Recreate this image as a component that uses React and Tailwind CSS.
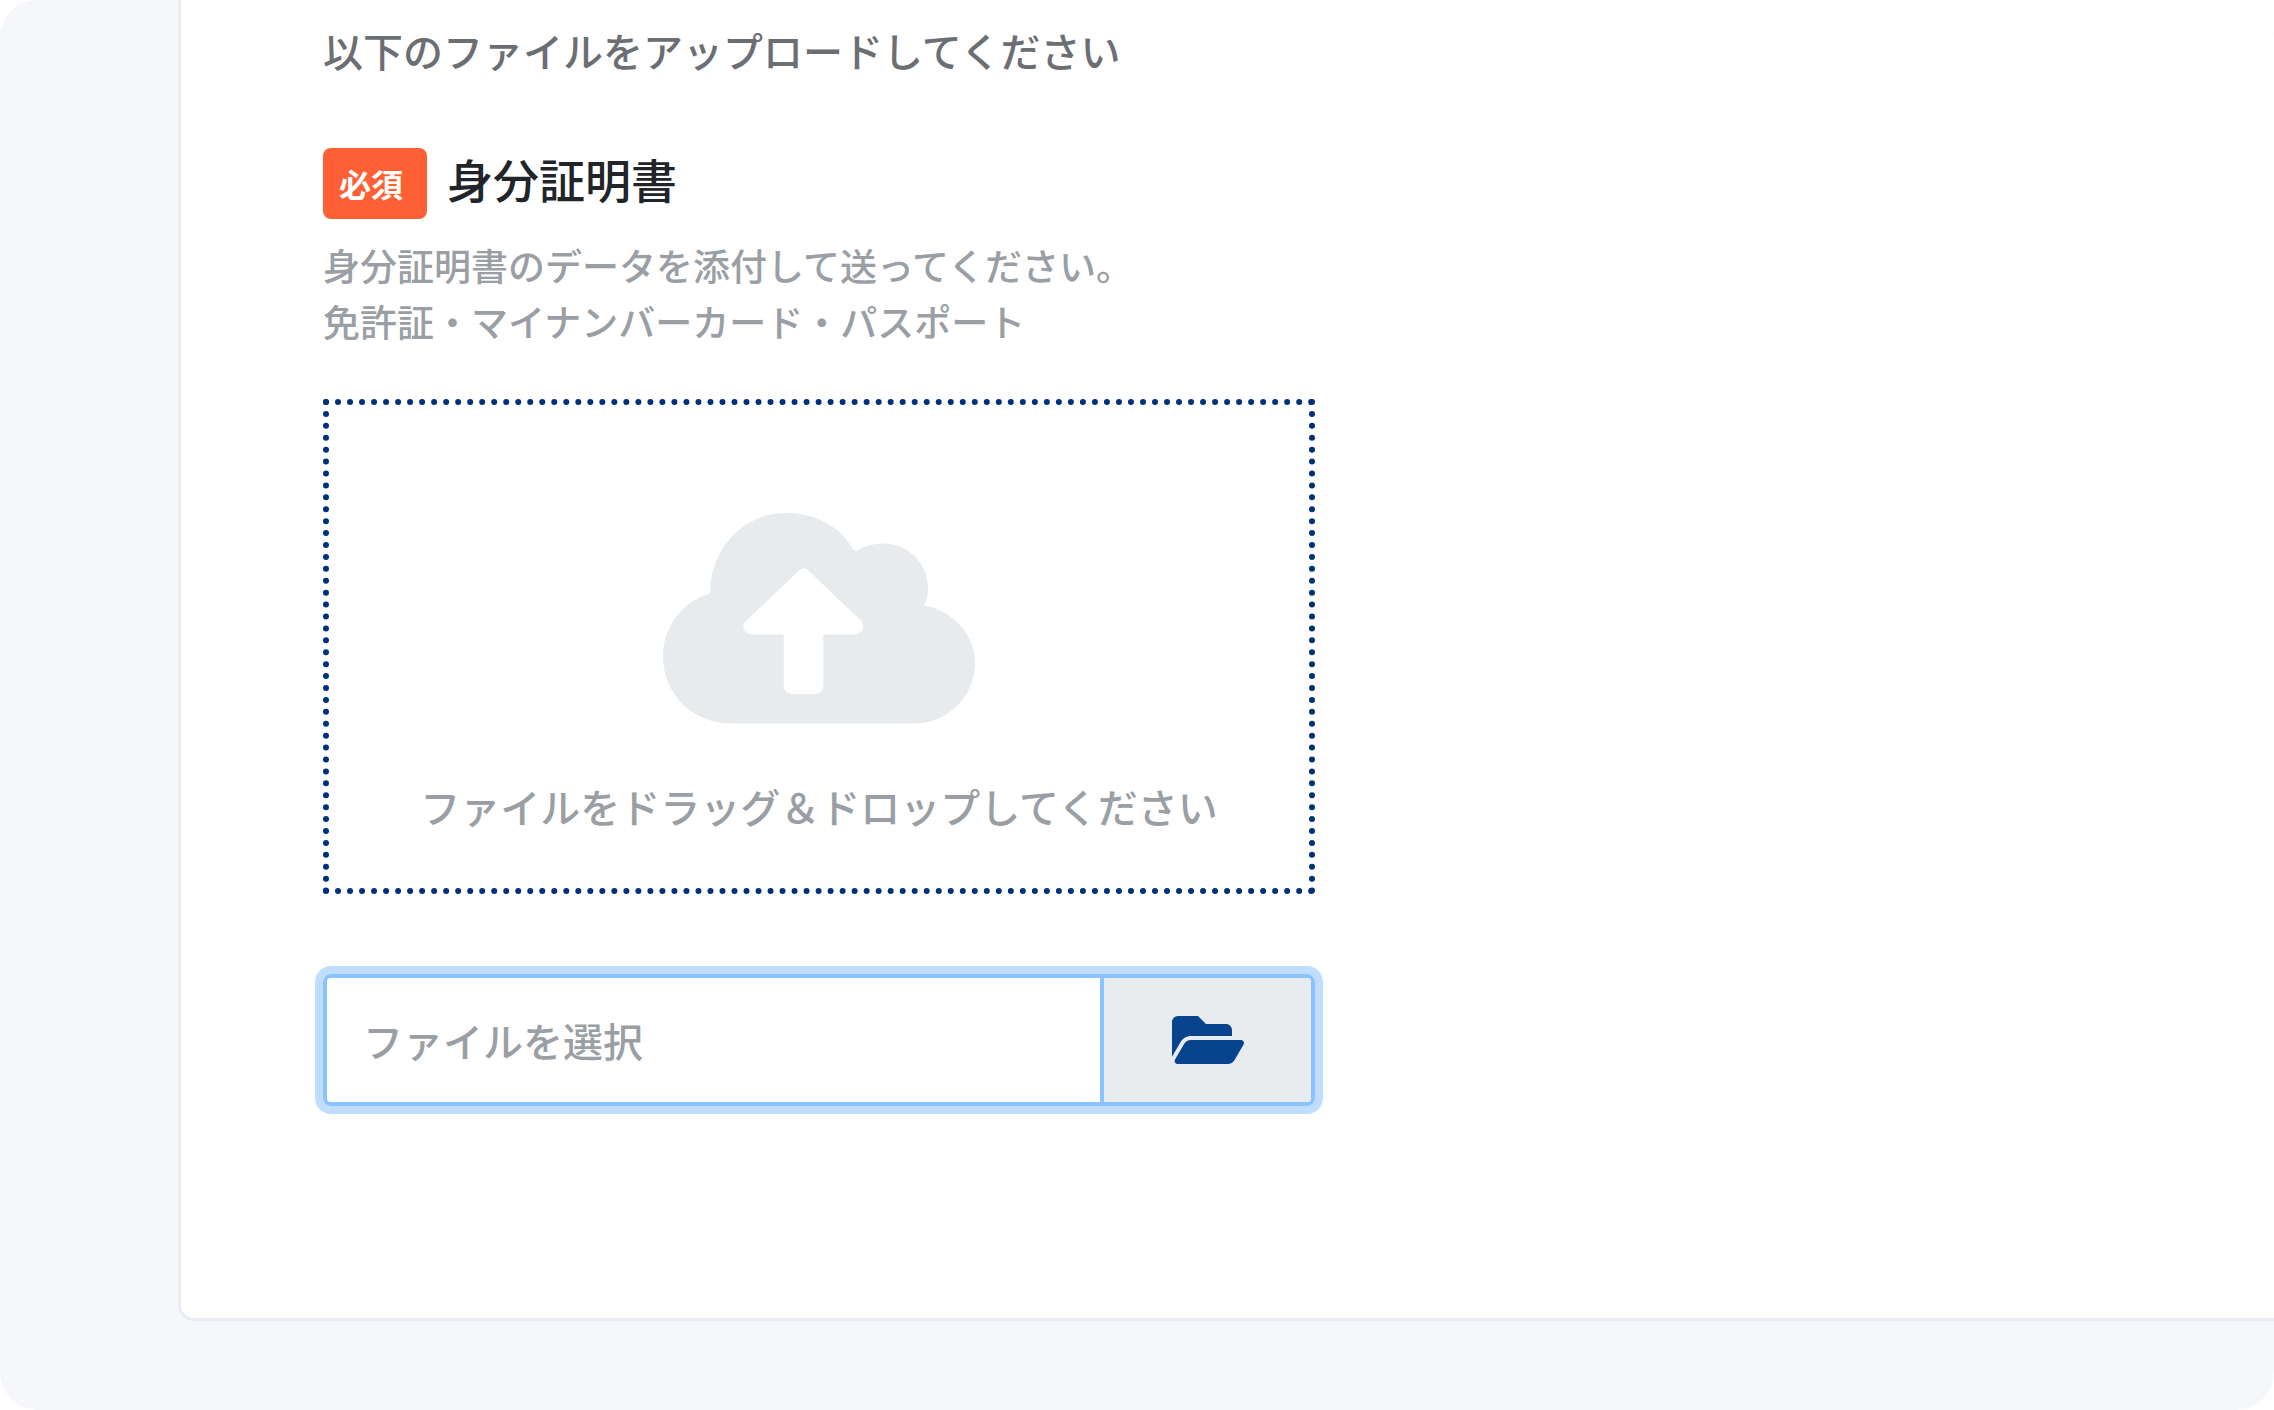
import { FaFolderOpen } from 'react-icons/fa';

/** Cloud with an upward arrow, shown inside the drop area */
function CloudUploadIcon() {
  return (
    <svg className="w-[312px]" viewBox="122 98 938 633" aria-hidden="true">
      <path
        fill="#e7ebee"
        d="M328 731C210 731 122 642 122 529C122 437 184 362 264 340C264 206 362 98 492 98C580 98 655 138 693 206Q699 216 708 210C730 196 757 190 784 190C860 190 919 250 919 325C919 345 915 362 907 376C995 392 1060 465 1060 548C1060 650 978 731 876 731Z"
      />
      <path
        fill="#fff"
        d="M533 269Q545 261 557 269L718 422C730 438 722 463 700 463H604V616Q604 642 578 642H511Q485 642 485 616V463H390C366 463 356 440 370 424Z"
      />
    </svg>
  );
}

function RequiredBadge() {
  return (
    <span className="rounded-lg bg-[#ff5f34] pr-6 pl-4 text-[32px] leading-[71px] font-bold text-white">
      必須
    </span>
  );
}

function DropArea() {
  return (
    <div className="mt-[50px] flex flex-col items-center border-6 border-dotted border-[#003078] pt-[108px] pb-12">
      <CloudUploadIcon />
      <p className="mt-12 text-[40px] leading-[68px] text-[#999fa5]">
        ファイルをドラッグ＆ドロップしてください
      </p>
    </div>
  );
}

function FilePicker() {
  return (
    <div className="mt-20 flex rounded-lg border-4 border-[#8bc3ff] ring-8 ring-[#bfdeff]">
      <input
        id="identity-file"
        type="text"
        readOnly
        placeholder="ファイルを選択"
        className="h-[124px] min-w-0 flex-1 rounded-l-sm bg-white px-9 text-[40px] text-[#495057] outline-none placeholder:text-[#999fa5]"
      />
      <button
        type="button"
        aria-label="ファイルを選択"
        className="flex w-[211px] items-center justify-center rounded-r-sm border-l-4 border-[#8bc3ff] bg-[#e8ecef] text-[#08448d]"
      >
        <FaFolderOpen className="h-16 w-[72px]" />
      </button>
    </div>
  );
}

export default function App() {
  return (
    <div className="bg-white font-['Noto_Sans_CJK_JP',sans-serif] font-medium">
      <div className="flex min-h-screen flex-col overflow-hidden rounded-[38px] bg-[#f5f7fb] pb-[89px] pl-[178px]">
        <main className="flex-1 rounded-bl-2xl border-b-3 border-l-3 border-[#e9ecf0] bg-white pt-5 pl-[142px]">
          <div className="max-w-[992px]">
            <p className="text-[40px] leading-[60px] text-[#6b6e73]">
              以下のファイルをアップロードしてください
            </p>
            <div className="mt-[68px] flex items-start gap-5">
              <RequiredBadge />
              <label htmlFor="identity-file" className="text-[46px] leading-[60px] text-[#212429]">
                身分証明書
              </label>
            </div>
            <p className="mt-[18px] text-[37px] leading-[56px] text-[#999fa5]">
              身分証明書のデータを添付して送ってください。
              <br />
              免許証・マイナンバーカード・パスポート
            </p>
            <DropArea />
            <FilePicker />
          </div>
        </main>
      </div>
    </div>
  );
}
